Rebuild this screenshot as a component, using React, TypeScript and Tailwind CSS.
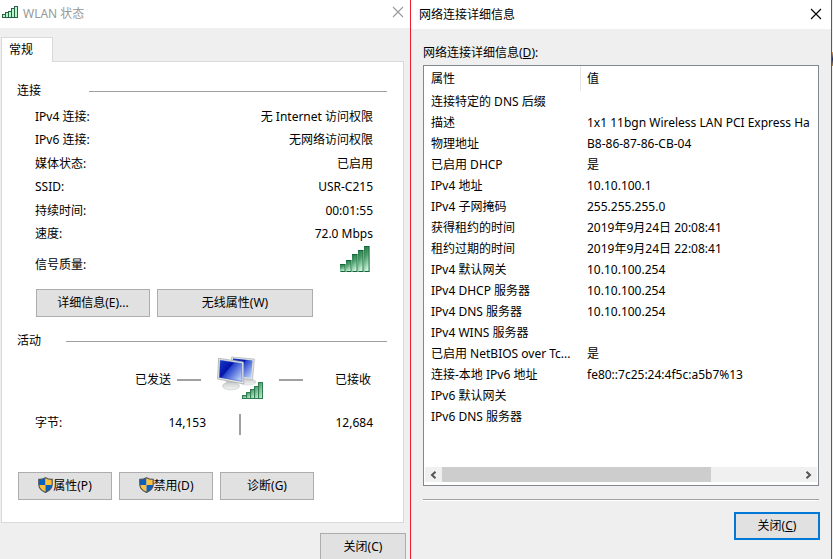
import React from 'react';

const connectionRows = [
  { label: 'IPv4 连接:', value: '无 Internet 访问权限' },
  { label: 'IPv6 连接:', value: '无网络访问权限' },
  { label: '媒体状态:', value: '已启用' },
  { label: 'SSID:', value: 'USR-C215' },
  { label: '持续时间:', value: '00:01:55' },
  { label: '速度:', value: '72.0 Mbps' },
];

const detailRows = [
  ['连接特定的 DNS 后缀', ''],
  ['描述', '1x1 11bgn Wireless LAN PCI Express Ha'],
  ['物理地址', 'B8-86-87-86-CB-04'],
  ['已启用 DHCP', '是'],
  ['IPv4 地址', '10.10.100.1'],
  ['IPv4 子网掩码', '255.255.255.0'],
  ['获得租约的时间', '2019年9月24日 20:08:41'],
  ['租约过期的时间', '2019年9月24日 22:08:41'],
  ['IPv4 默认网关', '10.10.100.254'],
  ['IPv4 DHCP 服务器', '10.10.100.254'],
  ['IPv4 DNS 服务器', '10.10.100.254'],
  ['IPv4 WINS 服务器', ''],
  ['已启用 NetBIOS over Tc...', '是'],
  ['连接-本地 IPv6 地址', 'fe80::7c25:24:4f5c:a5b7%13'],
  ['IPv6 默认网关', ''],
  ['IPv6 DNS 服务器', ''],
];

const TitleSignalIcon = () => (
  <svg width="16" height="12" viewBox="0 0 16 12" fill="#b4f8cc" stroke="#2a6344" shapeRendering="crispEdges" aria-hidden="true">
    <rect x="0.5" y="8.5" width="3" height="3" />
    <rect x="3.5" y="6.5" width="3" height="5" />
    <rect x="6.5" y="5.5" width="3" height="6" />
    <rect x="9.5" y="2.5" width="3" height="9" />
    <rect x="12.5" y="0.5" width="3" height="11" />
  </svg>
);

const SignalIcon = () => (
  <svg width="30" height="26" viewBox="0 0 30 26" aria-hidden="true">
    <defs>
      <linearGradient id="signal" x1="0" y1="0" x2="0.3" y2="1">
        <stop offset="0" stopColor="#1c7440" />
        <stop offset="0.45" stopColor="#4c9c6c" />
        <stop offset="1" stopColor="#c9f2d8" />
      </linearGradient>
    </defs>
    <g fill="url(#signal)">
      <rect x="0" y="18" width="5" height="8" />
      <rect x="6" y="14" width="5" height="12" />
      <rect x="12" y="8" width="5" height="18" />
      <rect x="18" y="4" width="5" height="22" />
      <rect x="24" y="0" width="5" height="26" />
    </g>
    <g fill="#17643a">
      <path d="M0 18H5.6V26H4.6V19H0Z" />
      <path d="M6 14H11.6V26H10.6V15H6Z" />
      <path d="M12 8H17.6V26H16.6V9H12Z" />
      <path d="M18 4H23.6V26H22.6V5H18Z" />
      <path d="M24 0H29.6V26H28.6V1H24Z" />
      <path d="M0.5 25H5V26H0.5ZM6.5 25H11V26H6.5ZM12.5 25H17V26H12.5ZM18.5 25H23V26H18.5ZM24.5 25H29V26H24.5Z" />
    </g>
  </svg>
);

const ComputersIcon = () => (
  <svg width="46" height="44" viewBox="0 0 46 44" aria-hidden="true">
    <defs>
      <linearGradient id="screen" x1="0" y1="0.1" x2="1" y2="0.9">
        <stop offset="0" stopColor="#1238c8" />
        <stop offset="0.38" stopColor="#0512a8" />
        <stop offset="0.42" stopColor="#2343cc" />
        <stop offset="1" stopColor="#c5d9fb" />
      </linearGradient>
      <linearGradient id="base" x1="0" y1="0" x2="0" y2="1">
        <stop offset="0" stopColor="#c9cccc" />
        <stop offset="1" stopColor="#f4f5f5" />
      </linearGradient>
      <linearGradient id="bars" x1="0" y1="0" x2="0.5" y2="1">
        <stop offset="0" stopColor="#3d8f5f" />
        <stop offset="1" stopColor="#b4e5c5" />
      </linearGradient>
    </defs>
    <ellipse cx="31" cy="26" rx="8" ry="3" fill="url(#base)" stroke="#c4c7c8" strokeWidth="0.5" />
    <path d="M14.5 1 37.5 3 35.5 24 14 20.5Z" fill="#dcdedf" stroke="#b3b7ba" strokeWidth="0.7" />
    <path d="M16 2.5 35.5 4.4 34 22 16 19Z" fill="url(#screen)" />
    <path d="M9 24 18 26 19 30 9 30Z" fill="#c6c9ca" />
    <ellipse cx="14" cy="30" rx="8.5" ry="3.8" fill="url(#base)" stroke="#bdc1c3" strokeWidth="0.6" />
    <path d="M1.6 2.3 26.4 6 26.8 28 0.6 23Z" fill="#e7e8e8" stroke="#a7abad" strokeWidth="0.8" />
    <path d="M3.2 4.2 24.7 7.4 25 25.4 2.4 21.4Z" fill="url(#screen)" stroke="#1b3ea8" strokeWidth="0.4" />
    <g fill="url(#bars)" stroke="#2f7d50" strokeWidth="1">
      <rect x="25.5" y="39.5" width="4" height="3" />
      <rect x="29.5" y="36.5" width="4" height="6" />
      <rect x="33.5" y="33.5" width="4" height="9" />
      <rect x="37.5" y="30.5" width="4" height="12" />
      <rect x="41.5" y="26.5" width="4" height="16" />
    </g>
  </svg>
);

const ShieldIcon = () => (
  <svg width="15" height="16" viewBox="0 0 15 16" className="mb-[2px]" aria-hidden="true">
    <defs>
      <clipPath id="shield">
        <path d="M7.5 0.7C5.7 1.9 3.4 2.4 0.8 2.4V7.2C0.8 11.2 3.6 13.8 7.5 15.4 11.4 13.8 14.2 11.2 14.2 7.2V2.4C11.6 2.4 9.3 1.9 7.5 0.7Z" />
      </clipPath>
    </defs>
    <g clipPath="url(#shield)">
      <path d="M0 0H7.5V8H0Z" fill="#0a60bd" />
      <path d="M7.5 0H15V8H7.5Z" fill="#fdbf3c" />
      <path d="M0 8H7.5V16H0Z" fill="#fdbf3c" />
      <path d="M7.5 8H15V16H7.5Z" fill="#0a60bd" />
    </g>
    <path d="M7.5 0.7C5.7 1.9 3.4 2.4 0.8 2.4V7.2C0.8 11.2 3.6 13.8 7.5 15.4 11.4 13.8 14.2 11.2 14.2 7.2V2.4C11.6 2.4 9.3 1.9 7.5 0.7Z" fill="none" stroke="#4d5359" strokeWidth="1.2" />
  </svg>
);

const CloseIcon = () => (
  <svg width="12" height="12" viewBox="0 0 12 12" fill="none" stroke="currentColor" strokeWidth="1.1" aria-hidden="true">
    <path d="M1 1 11 11M11 1 1 11" />
  </svg>
);

const PushButton = ({ className, children }: { className: string; children: React.ReactNode }) => (
  <button type="button" className={`flex h-7 items-center justify-center bg-[#e1e1e1] ${className}`}>
    {children}
  </button>
);

const SectionTitle = ({ title, labelClass }: { title: string; labelClass: string }) => (
  <div className="flex h-5 items-center pl-[15px] pr-4">
    <h2 className={labelClass}>{title}</h2>
    <div className="h-px flex-1 bg-[#a0a0a0]"></div>
  </div>
);

const StatusWindow = () => (
  <section className="flex min-w-0 flex-col border-r border-[#ee1c2e] bg-[#efefef]">
    <header className="flex h-7 shrink-0 items-center justify-between bg-white pl-[2px] pr-[6px] text-[#999999]">
      <div className="flex items-center gap-[5px]">
        <div className="mb-1">
          <TitleSignalIcon />
        </div>
        <h1>WLAN 状态</h1>
      </div>
      <button type="button" aria-label="关闭 WLAN 状态" className="mb-1">
        <CloseIcon />
      </button>
    </header>

    <div className="ml-px mr-[6px] mt-[9px] flex flex-col items-start">
      <button type="button" className="z-10 -mb-px h-[25px] w-[52px] border border-b-0 border-[#d9d9d9] bg-white pl-[7px] text-left">
        常规
      </button>

      <div className="w-full border border-[#d9d9d9] bg-white pb-[22px] pt-[19px]">
        {/* Connection */}
        <SectionTitle title="连接" labelClass="w-[72px]" />
        <dl className="mt-1 grid h-[141px] grid-rows-6 pl-[33px] pr-[30px]">
          {connectionRows.map((row) => (
            <div key={row.label} className="flex items-center justify-between">
              <dt>{row.label}</dt>
              <dd>{row.value}</dd>
            </div>
          ))}
        </dl>
        <div className="flex h-7 items-end justify-between pl-[33px] pr-[33px]">
          <span>信号质量:</span>
          <div className="self-start">
            <SignalIcon />
          </div>
        </div>
        <div className="mt-[15px] flex gap-[7px] pl-[34px]">
          <PushButton className="w-[114px] border border-[#adadad]">详细信息(E)...</PushButton>
          <PushButton className="w-[156px] border border-[#adadad]">无线属性(W)</PushButton>
        </div>

        {/* Activity */}
        <div className="mt-[14px]">
          <SectionTitle title="活动" labelClass="w-[49px]" />
        </div>
        <div className="mt-[5px] grid grid-cols-[72px_1fr_46px_1fr] pl-[33px] pr-[30px]">
          <div className="col-start-2 flex items-center justify-end gap-[6px] pr-4 pt-1">
            <span>已发送</span>
            <div className="h-[2px] w-6 bg-[#a0a0a0]"></div>
          </div>
          <ComputersIcon />
          <div className="flex items-center justify-between pl-4 pr-[2px] pt-1">
            <div className="h-[2px] w-6 bg-[#a0a0a0]"></div>
            <span>已接收</span>
          </div>
        </div>
        <div className="mt-[14px] grid h-[21px] grid-cols-[72px_1fr_46px_1fr] items-start pl-[33px] pr-[30px]">
          <span>字节:</span>
          <span className="pr-[11px] text-right">14,153</span>
          <div className="mx-auto h-full w-[2px] bg-[#a0a0a0]"></div>
          <span className="text-right">12,684</span>
        </div>

        <div className="mt-[37px] flex gap-[7px] pl-4">
          <PushButton className="w-[94px] border border-[#adadad]">
            <ShieldIcon />
            属性(P)
          </PushButton>
          <PushButton className="w-[94px] border border-[#adadad]">
            <ShieldIcon />
            禁用(D)
          </PushButton>
          <PushButton className="w-[94px] border border-[#adadad]">诊断(G)</PushButton>
        </div>
      </div>
    </div>

    <footer className="mt-[10px] flex justify-end pr-1">
      <PushButton className="w-[86px] border border-[#adadad]">关闭(C)</PushButton>
    </footer>
  </section>
);

const ScrollBar = () => (
  <div className="mx-px mb-[2px] mt-10 flex h-[15px] bg-[#f0f0f0] text-[#555555]">
    <button type="button" aria-label="向左滚动" className="flex w-[17px] items-center justify-center">
      <svg width="7" height="8" viewBox="0 0 7 8" fill="none" stroke="currentColor" strokeWidth="2" aria-hidden="true">
        <path d="M5.5 0.8 2 4 5.5 7.2" />
      </svg>
    </button>
    <div className="flex-1">
      <div className="h-full w-3/4 bg-[#cdcdcd]"></div>
    </div>
    <button type="button" aria-label="向右滚动" className="flex w-[17px] items-center justify-center">
      <svg width="7" height="8" viewBox="0 0 7 8" fill="none" stroke="currentColor" strokeWidth="2" aria-hidden="true">
        <path d="M1.5 0.8 5 4 1.5 7.2" />
      </svg>
    </button>
  </div>
);

const DetailsWindow = () => (
  <section className="flex min-w-0 flex-1 flex-col border-r border-[#c9283c] bg-[#efefef]">
    <header className="flex h-[29px] shrink-0 items-center justify-between bg-white pl-2 pr-[9px]">
      <h1>网络连接详细信息</h1>
      <button type="button" aria-label="关闭网络连接详细信息" className="mb-[2px]">
        <CloseIcon />
      </button>
    </header>

    <div className="flex flex-col px-3 pt-[15px]">
      <h2 id="details-label">
        网络连接详细信息(<u>D</u>):
      </h2>
      <div className="mt-[3px] overflow-hidden border border-[#828790] bg-white pb-px">
        <table aria-labelledby="details-label" className="w-full table-fixed border-separate border-spacing-0 text-left">
          <thead>
            <tr className="h-[25px]">
              <th className="w-[157px] border-r border-[#e5e5e5] p-0 pl-[7px] font-normal">属性</th>
              <th className="p-0 pl-[6px] font-normal">值</th>
            </tr>
          </thead>
          <tbody>
            {detailRows.map(([name, value]) => (
              <tr key={name} className="h-[21px]">
                <td className="whitespace-nowrap p-0 pl-[7px]">{name}</td>
                <td className="overflow-hidden whitespace-nowrap p-0 pl-[6px]">{value}</td>
              </tr>
            ))}
          </tbody>
        </table>
        <ScrollBar />
      </div>
      <div className="mt-[13px] h-[2px] border-b border-t border-b-white border-t-[#a0a0a0]"></div>
      <div className="-mr-px mt-[11px] flex justify-end">
        <PushButton className="w-[86px] border-2 border-[#0078d7]">
          <span>
            关闭(<u>C</u>)
          </span>
        </PushButton>
      </div>
    </div>
  </section>
);

export default function App() {
  return (
    <main className="grid h-screen grid-cols-[411fr_422fr] overflow-hidden bg-[#efefef] font-['Noto_Sans','Noto_Sans_CJK_SC',sans-serif] text-[12px] leading-[18px] text-black">
      <StatusWindow />
      <div className="flex min-w-0">
        <DetailsWindow />
        <div className="w-px bg-[#efefef] pt-[52px]">
          <div className="h-[14px] bg-linear-to-b from-[#f0a030] via-[#1a2a6c] to-[#c08a30]"></div>
        </div>
      </div>
    </main>
  );
}
